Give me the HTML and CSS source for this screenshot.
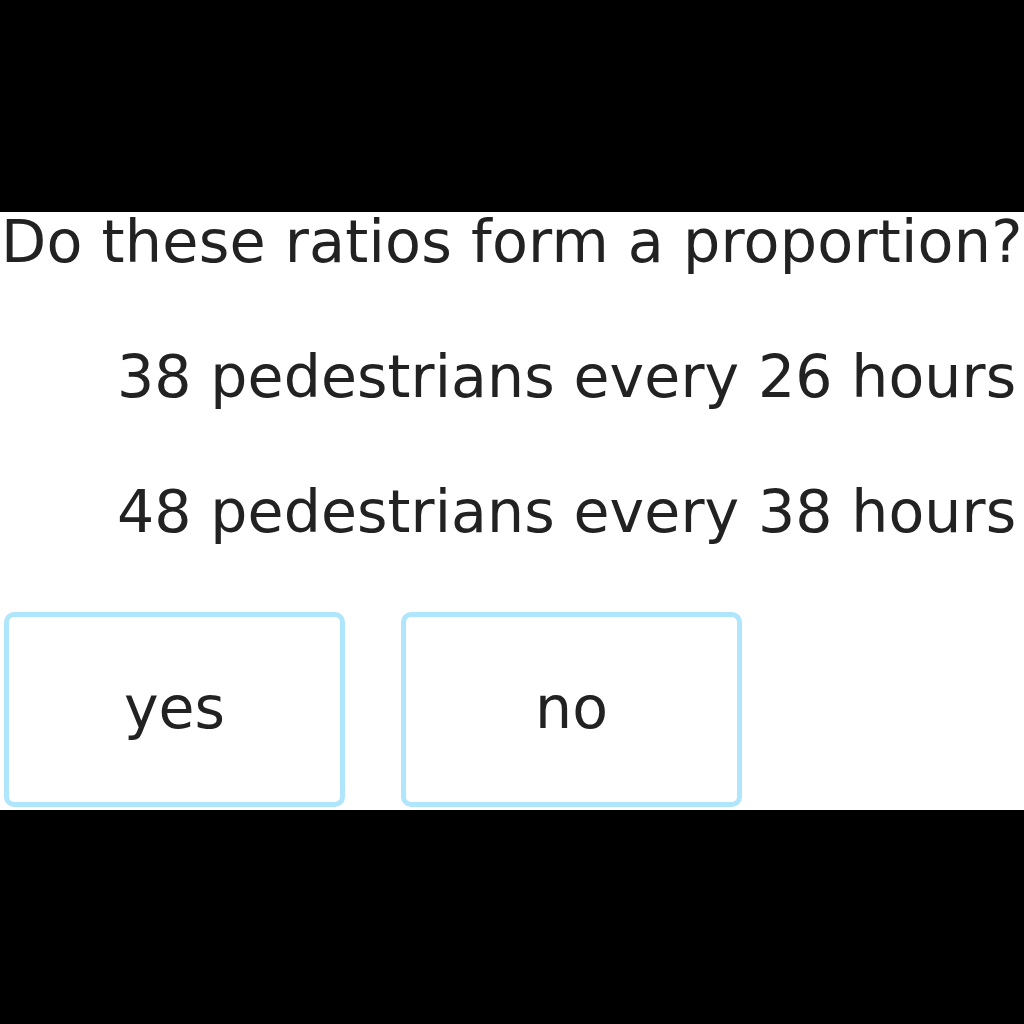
FILE: index.html
```html
<!DOCTYPE html>
<html>
<head>
<meta charset="utf-8">
<link rel="stylesheet" href="styles.css">
</head>
<body>
<main class="panel">
  <h1 class="question">Do these ratios form a proportion?</h1>
  <p class="ratio">38 pedestrians every 26 hours</p>
  <p class="ratio">48 pedestrians every 38 hours</p>
  <div class="choices">
    <button class="choice">yes</button>
    <button class="choice">no</button>
  </div>
</main>
</body>
</html>
```

FILE: styles.css
```css
html, body {
  margin: 0;
  padding: 0;
  background: #000;
  width: 1024px;
  height: 1024px;
  overflow: hidden;
}

body {
  display: flex;
  flex-direction: column;
  justify-content: flex-start;
  padding-top: 212px;
  box-sizing: border-box;
  font-family: "DejaVu Sans", Verdana, sans-serif;
  color: #222;
}

.panel {
  background: #fff;
  height: 598px;
  box-sizing: border-box;
  padding-top: 0;
}

.question {
  margin: 0;
  padding-left: 1px;
  font-size: 58.8px;
  font-weight: normal;
  line-height: 60px;
  letter-spacing: 0.2px;
  white-space: nowrap;
}

.ratio {
  margin: 75px 0 0 0;
  padding-left: 117px;
  font-size: 58.5px;
  line-height: 60px;
  letter-spacing: 0.1px;
  white-space: nowrap;
}

.choices {
  display: flex;
  gap: 56px;
  margin-top: 70px;
  padding-left: 4px;
}

.choice {
  width: 341px;
  height: 195px;
  box-sizing: border-box;
  border: 5px solid #b0e6fc;
  border-radius: 10px;
  background: #fff;
  font-family: "DejaVu Sans", Verdana, sans-serif;
  font-size: 58.5px;
  line-height: 60px;
  color: #222;
  padding: 0 0 4px 0;
  display: flex;
  align-items: center;
  justify-content: center;
}
```
